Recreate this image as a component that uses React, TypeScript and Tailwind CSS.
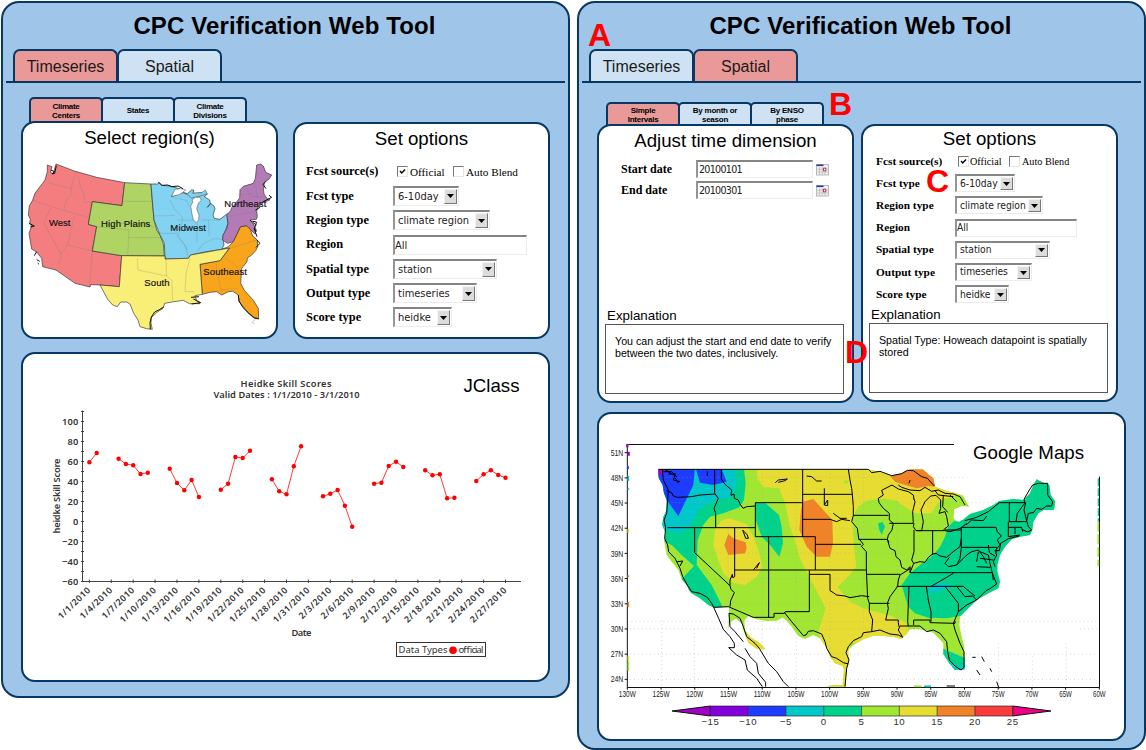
import React from "react";

const SANS = "font-['Liberation_Sans',Arial,sans-serif]";
const SERIF = "font-['Liberation_Serif','Times_New_Roman',serif]";
const UI = "font-['DejaVu_Sans_Condensed','DejaVu_Sans',sans-serif]";

function Tab({ label, active, first }: { label: string; active?: boolean; first?: boolean }) {
  return (
    <div
      className={`flex h-8 w-[105px] items-center justify-center rounded-t-[7px] border-2 border-b-0 border-[#073763] pt-[2px] text-[16px] leading-none text-[#1a1a1a] ${
        active ? "bg-[#ea9999]" : "bg-[#cfe2f3]"
      } ${first ? "" : "-ml-px"}`}
    >
      {label}
    </div>
  );
}

function SubTab({ lines, active, first }: { lines: string[]; active?: boolean; first?: boolean }) {
  return (
    <div
      className={`flex h-full w-[74px] flex-col items-center justify-center rounded-t-[5px] border-2 border-b-0 border-[#073763] text-[8px] leading-[9px] font-bold tracking-[-0.25px] ${
        active ? "bg-[#ea9999]" : "bg-[#cfe2f3]"
      } ${first ? "" : "-ml-[2px]"}`}
    >
      {lines.map((l) => (
        <div key={l}>{l}</div>
      ))}
    </div>
  );
}

function Arrow() {
  return (
    <div className="flex h-full w-[13px] shrink-0 items-center justify-center border border-t-[#f4f4f4] border-l-[#f4f4f4] border-r-[#777] border-b-[#777] bg-[#dcdcdc]">
      <svg width="7" height="4" viewBox="0 0 7 4">
        <path d="M0 0H7L3.5 4Z" fill="#000" />
      </svg>
    </div>
  );
}

const SUNKEN = "border-t-2 border-l-2 border-r border-b border-t-[#858585] border-l-[#959595] border-r-[#ececec] border-b-[#ececec] bg-white text-[#222]";

function Select({ text, width, small }: { text: string; width: string; small?: boolean }) {
  return (
    <div className={`flex items-center justify-between p-px pl-[3px] ${SUNKEN} ${width} ${small ? "h-[18px]" : "h-[20px]"}`}>
      <span className="whitespace-nowrap">{text}</span>
      <Arrow />
    </div>
  );
}

function Check({ checked }: { checked?: boolean }) {
  return (
    <span className="flex h-[11px] w-[11px] shrink-0 items-center justify-center border-t-[1.5px] border-r border-b border-l-[1.5px] border-t-[#777] border-r-[#e6e6e6] border-b-[#e6e6e6] border-l-[#777] bg-white">
      {checked && (
        <svg width="7" height="7" viewBox="0 0 7 7">
          <path d="M1 3L2.7 5L6 1.5" fill="none" stroke="#000" strokeWidth="1.4" />
        </svg>
      )}
    </span>
  );
}

const options = [
  { label: "Fcst type", value: "6-10day", big: "w-[66px]", small: "w-[60px]" },
  { label: "Region type", value: "climate region", big: "w-[97px]", small: "w-[88px]" },
  { label: "Region", value: "All", big: "w-[134px]", small: "w-[122px]", input: true },
  { label: "Spatial type", value: "station", big: "w-[104px]", small: "w-[95px]" },
  { label: "Output type", value: "timeseries", big: "w-[84px]", small: "w-[77px]" },
  { label: "Score type", value: "heidke", big: "w-[59px]", small: "w-[54px]" },
];

function OptionsForm({ small }: { small?: boolean }) {
  const row = small ? "h-[22.2px] grid-cols-[79px_1fr]" : "h-[24.3px] grid-cols-[87px_1fr]";
  const label = small ? "text-[11.35px]" : "text-[12.4px]";
  return (
    <div className={small ? "pl-[13px] text-[10.2px]" : "pl-[11px] text-[11px]"}>
      <div className={`grid items-center ${row}`}>
        <span className={`${SERIF} font-bold ${label}`}>Fcst source(s)</span>
        <span className={`flex items-center ${SERIF} ${small ? "pl-[3px] text-[10.2px]" : "pl-[4px] text-[11.2px]"}`}>
          <Check checked />
          <span className={`pt-[2px] whitespace-nowrap ${small ? "w-[40px] pl-[1px]" : "w-[45px] pl-[2px]"}`}>Official</span>
          <Check />
          <span className="pt-[2px] pl-[2px] whitespace-nowrap">Auto Blend</span>
        </span>
      </div>
      {options.map((o) => (
        <div key={o.label} className={`grid items-center ${row}`}>
          <span className={`${SERIF} font-bold ${label}`}>{o.label}</span>
          <span className={`${UI} leading-none`}>
            {o.input ? (
              <span className={`flex items-center ${SUNKEN} ${small ? "h-[18px]" : "h-[20px]"} ${small ? o.small : o.big}`}>{o.value}</span>
            ) : (
              <Select text={o.value} width={small ? o.small : o.big} small={small} />
            )}
          </span>
        </div>
      ))}
    </div>
  );
}

function CalendarIcon() {
  return (
    <svg width="13" height="12" viewBox="0 0 13 12" className="mt-[3px]">
      <rect x="0.5" y="0.5" width="12" height="10.5" fill="#f2f2f2" stroke="#aaa" strokeWidth="0.8" />
      <rect x="0.5" y="0.5" width="7" height="1.6" fill="#2a35a0" />
      <path d="M1 5.3H12M1 8H12M3.5 3V11M6.2 3V11M9 3V11" stroke="#b4b4b4" strokeWidth="0.7" />
      <rect x="7.4" y="4.2" width="2.4" height="2.6" fill="#fff" stroke="#b03040" strokeWidth="0.9" />
    </svg>
  );
}

function DateRow({ label, value }: { label: string; value: string }) {
  return (
    <div className="flex h-[21px] items-center">
      <span className={`w-[75px] text-[12px] font-bold ${SERIF}`}>{label}</span>
      <span className={`mr-[3px] flex h-[18px] w-[117px] items-center pl-px text-[10.6px] leading-none tracking-[-0.7px] ${UI} ${SUNKEN}`}>{value}</span>
      <CalendarIcon />
    </div>
  );
}

function Explanation({ children }: { children: React.ReactNode }) {
  return (
    <div className="mr-[8px] mb-[7px] ml-[6px] mt-auto">
      <div className="pl-[2px] text-[13.33px] leading-[17px]">Explanation</div>
      <div className="h-[70px] border border-[#555] pt-[10px] pl-[9px] text-[10.67px] leading-[12px] whitespace-nowrap">{children}</div>
    </div>
  );
}

function RegionMap() {
  const regions = [
    ["#f47d80", "M82 135L96 140L91 157L100 161L108 132L160 152L230 172L314 188L306 257L217 245L205 313L230 320L217 393L305 407L298 500L240 495L212 494L210 501L165 490L108 450L75 442L68 440L65 415L50 396L35 387L27 340L35 318L29 310L31 298L25 285L28 258L38 240L45 220L60 200L75 180L82 155Z"],
    ["#b0d464", "M314 188L393 192L397 245L402 300L410 330L420 345L430 372L433 408L305 407L217 393L230 320L205 313L217 245L306 257Z"],
    ["#82d2f2", "M393 192L414 192L416 186L425 196L450 198L480 207L462 220L455 229L490 218L503 221L515 210L522 211L518 220L545 218L562 222L553 230L569 240L571 252L562 262L572 250L582 258L585 266L579 285L583 295L600 298L622 281L624 310L617 330L608 352L612 375L605 388L560 395L512 405L505 415L435 417L433 370L420 345L402 300Z"],
    ["#b37ab6", "M710 135L722 132L730 138L737 157L755 165L747 178L734 185L730 205L732 222L742 237L750 236L748 241L731 246L714 262L710 273L712 290L709 298L690 300L700 312L709 330L705 342L680 318L662 320L650 345L640 365L622 370L608 360L609 345L620 326L624 310L620 285L632 272L635 263L641 257L659 234L660 209L670 199L700 190L706 176Z"],
    ["#f9a51b", "M605 388L625 380L640 365L650 345L662 320L680 318L691 328L698 348L712 360L713 380L707 392L695 405L682 414L681 425L665 445L662 490L673 511L700 541L715 565L716 597L703 595L685 580L670 560L657 545L655 525L638 514L625 515L605 525L590 515L570 517L547 523L540 433L600 422L628 385Z"],
    ["#f9ee76", "M305 407L435 408L435 417L505 415L512 405L628 384L600 422L540 433L547 523L525 527L529 540L540 551L508 551L490 541L456 546L434 550L429 565L411 577L394 593L393 610L397 628L380 626L360 620L354 600L341 580L330 552L320 546L302 546L292 560L278 555L263 538L240 495L298 500Z"],
  ];
  return (
    <svg width="249" height="175" viewBox="12 120 747 525" className="block">
      {regions.map(([fill, d]) => (
        <path key={fill} d={d} fill={fill} stroke="#333" strokeWidth="2" strokeLinejoin="round" />
      ))}
      <path d="M490 218L503 221L515 210L522 211L518 220L545 218L556 210L562 222L540 228L515 234L505 226Z" fill="#82d2f2" stroke="#444" strokeWidth="1.5" />
      <path d="M455 229L465 208L482 206L497 210L478 224Z" fill="#fff" stroke="#444" strokeWidth="1.5" />
      <path d="M516 240L526 232L540 232L544 241L535 249L530 266L537 286L536 299L529 308L520 300L516 282L512 258L519 246Z" fill="#fff" stroke="#444" strokeWidth="1.5" />
      <path
        d="M85 188L155 206M168 158L152 208L157 222L137 245L132 270M38 240L110 265L207 293M175 170L182 203L190 218L194 246L216 247M92 262L72 311L122 401L124 416L113 434M162 290L143 375L122 401M143 375L217 393L208 500M309 244H397M303 310L380 312L402 322M230 320L327 330L323 406M327 353L423 353M404 288L465 286M412 340L470 340L490 370L503 390M449 239L465 270L488 293L482 325L472 350L495 375L505 415M459 232L500 242L508 260M472 300L524 301M531 308V368M565 300L568 350M531 395L548 372L582 356L605 358M352 415L354 450L440 468L456 482L458 545M438 417L440 468M510 415L498 460L495 515H523M587 424L600 500L605 512M614 412L645 435L665 455M628 385L711 360M624 290L698 275L713 285M545 300H602M600 510L652 505M680 200L690 228L735 232M705 192L713 232M663 225L700 220"
        fill="none"
        stroke="#777"
        strokeOpacity="0.38"
        strokeWidth="2"
      />
      <path d="M93 150L103 155L96 162L104 160L109 137M27 310L43 318L31 321M50 395L43 407M50 419L59 424M53 429L57 433M391 628L390 608L394 591L404 576L418 569L431 561M655 525L657 543L669 563L686 579L703 593L716 596M513 532L537 530M520 537L542 548L515 552M690 300L707 314L703 326L709 334M728 246L755 232L747 226M710 360L720 370L708 382M738 184L729 193L738 206M706 271L720 262M702 325L711 350M698 304L709 306L707 318M416 187L426 196L443 195L455 200L474 198L489 206" fill="none" stroke="#111" strokeWidth="3" />
      <path d="M705 598L696 608L703 611" fill="none" stroke="#aaa" strokeWidth="2" />
      <g fontFamily="Liberation Sans, Arial, sans-serif" fontSize="28.5" fill="#111" stroke="#111" strokeWidth="0.5">
        <text x="87" y="317">West</text>
        <text x="243" y="320" textLength="148">High Plains</text>
        <text x="451" y="334" textLength="107">Midwest</text>
        <text x="373" y="497" textLength="76">South</text>
        <text x="613" y="260" textLength="126">Northeast</text>
        <text x="550" y="465" textLength="131">Southeast</text>
      </g>
    </svg>
  );
}

const series: [number, number][][] = [
  [[0, 58.7], [1, 68]],
  [[4, 62.3], [5, 57], [6, 55.7], [7, 47], [8, 48.3]],
  [[11, 52.3], [12, 38], [13, 30.7], [14, 41], [15, 24]],
  [[18, 31.3], [19, 37.3], [20, 64], [21, 63], [22, 70.3]],
  [[25, 41.7], [26, 29.7], [27, 26.7], [28, 54.7], [29, 74.7]],
  [[32, 24.7], [33, 27.3], [34, 31], [35, 15.3], [36, -5.7]],
  [[39, 37.3], [40, 38.3], [41, 55], [42, 59.3], [43, 54]],
  [[46, 50.7], [47, 45.7], [48, 46.7], [49, 22.7], [50, 23.3]],
  [[53, 40], [54, 46.7], [55, 50.7], [56, 46], [57, 43.3]],
];
const dates = ["1/1", "1/4", "1/7", "1/10", "1/13", "1/16", "1/19", "1/22", "1/25", "1/28", "1/31", "2/3", "2/6", "2/9", "2/12", "2/15", "2/18", "2/21", "2/24", "2/27"];
const dayX = (d: number) => 89.4 + d * 7.3;
const scoreY = (v: number) => 521 - v;

function Chart() {
  const ticks = Array.from({ length: 18 }, (_, i) => -60 + i * 10);
  return (
    <svg width="525" height="326" viewBox="23 354 525 326" className="block" fontFamily="Noto Sans, DejaVu Sans, sans-serif" fill="#333">
      <g fontSize="9.3" fontWeight="600">
        <text x="240.5" y="387" textLength="91">Heidke Skill Scores</text>
        <text x="213.5" y="397.5" textLength="146">Valid Dates : 1/1/2010 - 3/1/2010</text>
        <text x="291.5" y="636" textLength="20">Date</text>
        <text transform="translate(59.5 533.5) rotate(-90)" textLength="75">heidke Skill Score</text>
      </g>
      <path d="M82.5 410.5V581.5H521" fill="none" stroke="#444" />
      {ticks.map((t) => (
        <g key={t}>
          <path d={`M81 ${scoreY(t) + 0.5}h3`} stroke="#444" />
          {t % 20 === 0 && (
            <text x="78.5" y={scoreY(t) + 4.3} textAnchor="end" fontSize="9.3" fontWeight="600" letterSpacing="0.2">
              {t < 0 ? `−${-t}` : t}
            </text>
          )}
        </g>
      ))}
      {dates.map((d, i) => (
        <g key={d}>
          <path d={`M${dayX(i * 3)} 579.5v3.5`} stroke="#444" />
          <text transform={`translate(${dayX(i * 3) + 2} 590.5) rotate(-44)`} textAnchor="end" fontSize="8.8" fontWeight="600" letterSpacing="0.55">
            {`${d}/2010`}
          </text>
        </g>
      ))}
      {series.map((s, i) => (
        <g key={i}>
          <polyline points={s.map(([d, v]) => `${dayX(d)},${scoreY(v)}`).join(" ")} fill="none" stroke="#ff3a3a" />
          {s.map(([d, v]) => (
            <circle key={d} cx={dayX(d)} cy={scoreY(v)} r="2.2" fill="#ff0000" />
          ))}
        </g>
      ))}
      <rect x="396.5" y="642.5" width="89" height="14" fill="#fff" stroke="#333" />
      <text x="398.5" y="652.5" fontSize="9.5" textLength="49">Data Types</text>
      <circle cx="453" cy="650.3" r="3.8" fill="#ff0000" />
      <text x="458.5" y="652.5" fontSize="9.5" textLength="25">official</text>
      <text x="463.5" y="392" fontSize="18.67" fill="#000" fontFamily="Liberation Sans, Arial, sans-serif">
        JClass
      </text>
    </svg>
  );
}

const LAND =
  "M175 118H805L835 125L875 137L905 130L930 118H968L985 133L1000 145L1005 170L1040 183L1065 188L1090 197L1100 218L1108 230L1085 228L1065 240L1060 262L1070 275L1088 270L1110 252L1150 240L1180 225L1198 213L1240 207L1270 210L1290 190L1300 165L1310 148L1330 158L1348 165L1352 195L1366 215L1362 240L1330 240L1315 250L1300 275L1297 300L1290 315L1260 320L1235 328L1215 350L1200 375L1192 405L1192 425L1200 455L1195 475L1165 490L1130 510L1100 540L1080 560L1078 585L1085 620L1093 650L1094 718L1065 720L1048 700L1030 672L1030 640L1012 620L1000 608L960 598L930 598L920 612L902 627L880 620L840 617L820 617L790 628L760 645L745 660L745 690L740 720L736 770H680L700 765L728 766L732 720L728 708L705 700L690 680L680 655L660 625L640 615L615 627L595 618L575 590L560 572L548 563L530 572L500 573L470 568L445 558L433 572L435 600L450 620L480 640L497 658L470 656L445 638L430 600L425 580L408 566L392 575L385 598L387 532H341L325 525L300 505L270 487L260 465L245 448L235 420L215 395L200 375L193 335L197 310L187 285L190 262L200 240L200 210L192 190L188 165L175 142Z";

const bands: [string, string][] = [
  ["#00d28c", "M160 100H430L437 160L432 210L418 232L370 250L330 260L310 285L293 330L290 405L305 425L335 465L365 525L367 540H320L240 452L282 408L245 375L215 345L180 330Z"],
  ["#00c8c8", "M160 100H400L412 155L395 200L345 213L300 235L270 290L235 312L200 300L180 290Z"],
  ["#1e3cff", "M170 110H285L280 165L235 258L200 210L180 160Z"],
  ["#1e3cff", "M288 118H365L380 155L340 165L300 158Z"],
  ["#a000c8", "M170 110H197L198 122L180 137H170Z"],
  ["#e6dc32", "M385 264L440 282L460 320L475 360L488 410L470 440L435 465L400 458L370 430L355 390L340 345L345 300L360 275Z"],
  ["#f08228", "M385 312L400 325L437 337L440 355L435 370L385 375L373 345Z"],
  ["#00d28c", "M467 218H495L537 255L545 290L549 340L538 380L510 345L485 320L467 270Z"],
  ["#e6dc32", "M470 110L472 145L490 172L537 175L555 218L570 290L590 350L600 385L625 435L677 535L655 605L670 650L680 780H750L750 640L925 625L925 598L915 575L880 560L830 545L790 535L750 515L712 470L735 450L769 410L762 350L757 265L775 230L800 212L850 205L890 212L920 235L945 250H995L1010 222L1030 208L1060 200L1078 195L1060 180L1010 170L1000 110Z"],
  ["#a0e632", "M730 156L738 151L746 156L738 162Z"],
  ["#f08228", "M870 137L900 130L930 115H968L990 130L1005 150L1007 170L985 168L950 175L915 165L885 155Z"],
  ["#f08228", "M608 215L640 207L665 235L697 270L699 340L690 380H650L620 350L598 300L603 240Z"],
  ["#00d28c", "M834 280L848 276L855 290L845 314L838 300Z"],
  ["#00d28c", "M1120 240L1060 275L1045 290L1035 320L1020 350L1000 375L960 405L930 430L905 465L915 500L925 530L945 550L985 563L1040 565L1078 558L1400 560V120H1240Z"],
  ["#00c8c8", "M980 472L1010 458L1050 463L1045 475L1025 480L1000 490L985 485Z"],
  ["#00d28c", "M1020 652L1096 685V725H1020Z"],
  ["#00c8c8", "M1035 690L1075 712L1096 700V725H1045Z"],
  ["#e6dc32", "M435 610L460 628L480 640L500 660H450Z"],
];

const BORDERS =
  "M175 118H805L815 128L840 124L875 137L905 131L922 121L940 122L965 140L982 145L1003 168M187 118L190 150L205 180L203 210L200 250L192 270L197 293L194 325L203 345L206 365L225 385L240 415L248 440L262 465L275 485L300 490L322 502L335 520L341 532L356 565L370 598L390 620L403 640V653H386L410 675L435 690L442 720L470 745L487 770M200 182L215 188L220 198L232 202L275 200L300 195L345 192M344 118V190L355 205L342 235L347 250V293M202 293H466M284 293V368L390 467L393 478L403 488L392 512L390 530M341 532L385 530L460 562H522V550H553L556 545H628V420M553 547L575 575L600 605L610 617L618 615L625 604L640 602L665 612L675 635L680 655L695 680L710 685L730 698L745 702M404 293V440L398 443L397 433L390 450V467M404 420H799M466 320V218H608M466 320H646V420M506 320V562M364 118V147L375 163L395 180L393 196L402 192L403 205L415 210L420 222L429 235L440 230L466 228M608 118V320M608 193H757M608 268H690L710 275L725 268L750 272M646 343H783M745 118L750 150L755 175L757 193L760 230V256L755 275L772 295L776 325L790 343L784 349L799 365V420L803 505L808 520V545L818 570L815 605M760 256H865M775 328H862L867 337M628 433H690V482L700 488L710 495L735 498L750 503L785 497L808 500M799 433H900M808 520H868M932 415L900 435L895 450L893 469L870 500L862 520L865 535L857 570H895V578L897 590M876 165L845 181L850 195L835 205L837 218L850 235L868 250V270L880 280L876 300L865 315L862 328L870 355L885 362L888 380L900 390L905 412L920 420L930 410V428L941 400M868 280H940M876 165L895 177L925 185L940 195L942 208M940 280L938 245L945 215L941 205M942 280L940 290L948 302H965L970 275L963 240L975 215L992 198L1008 196L1022 210L1022 235L1017 250L1035 245L1040 260L1045 288L1030 300M942 300V365L935 390L941 400L960 395L975 397L985 382L998 372L1008 370L1020 378L1040 382L1060 365L1080 350L1084 325M998 300V375M950 302H1035L1050 305L1083 294L1100 280M895 165L905 172L930 180L960 182L975 172L995 184L1015 180M930 150L927 160M930 428H1177L1180 450M890 469H1070L1095 500L1118 498L1130 510M927 469L923 575L925 588M979 469L985 510L993 545L993 575M941 585V570H990V578L1065 580V573M1035 469L1075 520V545M1060 430L1030 448L1000 465M993 469L1000 465M1070 469H1090L1100 478L1125 498M1084 292V352M1084 352H1190L1188 370M1084 292H1188L1192 305L1204 318L1192 330L1200 345L1185 362M1084 300L1035 300M1098 285L1115 270L1150 272L1160 258M1094 272L1130 262L1165 245L1198 218H1275L1272 208L1288 180L1298 165L1315 160H1343V195L1358 215L1355 228L1340 228L1325 238L1310 235L1300 248L1285 250L1280 272M1228 218V275M1248 275L1252 250L1270 225L1277 218L1272 240L1280 272M1228 275H1280M1225 292H1265L1268 305M1225 275V320L1260 315M1245 292V312M1280 272L1285 290L1295 300L1283 306L1265 298M1258 318L1225 326L1202 340L1198 362L1185 362L1190 375L1180 395L1185 410M1084 352L1080 385L1070 405L1045 410L1035 400L1048 382M1070 405L1100 375L1115 365L1135 360L1150 380L1160 400M1140 365L1165 375L1170 400L1177 430L1185 450L1190 462L1170 476L1158 482L1130 510L1100 525L1075 545L1060 580L1065 600L1080 640L1092 665V712L1083 720L1065 708L1048 690L1043 665L1040 635L1020 610L1000 600L980 605L960 588H900L895 600L908 622L895 615L870 612L840 600L815 605L790 608L785 620L760 632L745 650L738 668L747 690L740 715L735 770M387 550L400 552L420 565L430 590L440 620L465 640L478 655L490 675L505 700L530 725L550 755L565 770M387 550L390 590L405 605L430 635M435 655L450 680L470 700L475 730L497 757V770M186 125L215 125L225 135L220 150L240 155M197 120L230 140M205 132L228 132M225 143L235 160M322 124V138M526 158L535 150L562 147L555 152L535 157M428 300L442 315L445 325L437 325ZM460 420L478 398L470 415M232 395L248 393L240 408M620 138L635 140L650 153H665M673 175V225L683 210V227L673 225M700 250L720 265H740M1015 180L1035 190L1060 192L1080 200L1095 225M1005 182L1015 195L1060 200M1030 195L1028 230L1043 247M1050 195L1070 215M1135 365L1130 395M1165 345L1168 368L1185 378M1140 385L1180 390M1130 410L1170 412M1117 682H1127M1145 680L1153 695M1130 720L1140 735M1170 715L1175 725M1190 755L1197 775M1040 768H1065";

function ForecastMap() {
  const scale = ["#8200dc", "#1e3cff", "#00c8c8", "#00d28c", "#a0e632", "#e6dc32", "#f08228", "#fa3c3c"];
  const marks = ["−15", "−10", "−5", "0", "5", "10", "15", "20", "25"];
  const lats = [51, 48, 45, 42, 39, 36, 33, 30, 27, 24];
  const lons = [130, 125, 120, 115, 110, 105, 100, 95, 90, 85, 80, 75, 70, 65, 60];
  const lonX = (i: number) => 82 + i * 101.14;
  const latY = (i: number) => 68 + i * 75.55;
  return (
    <svg width="523" height="324" viewBox="0 -48 1569 972" className="block" fontFamily="Liberation Sans, Arial, sans-serif">
      <defs>
        <clipPath id="land">
          <path d={LAND} />
        </clipPath>
      </defs>
      <path d={LAND} fill="#a0e632" />
      <g clipPath="url(#land)">
        {bands.map(([fill, d], i) => (
          <path key={i} d={d} fill={fill} />
        ))}
      </g>
      <path d="M1062 238L1088 228L1110 240L1106 252L1092 262L1078 275L1064 270Z" fill="#fff" />
      <path d="M82 575H1500M185 570V770M283 597V770M385 118V532M487 118V770M589 118V770M690 118V770M791 118V590M892 130V600M993 180V600M1094 290V640M1196 230V460M1196 640V770M1297 160V270M1297 680V770M1399 640V770M175 142H1100M190 218H1370M190 294H1290M205 370H1200M250 446H1200M340 521H1120M90 597H1000M90 672H1490M90 748H1490M1440 597H1490" fill="none" stroke="#a8a8a8" strokeOpacity="0.55" strokeWidth="2.5" strokeDasharray="3 9" />
      <path d={BORDERS} fill="none" stroke="#000" strokeWidth="3" strokeLinejoin="round" />
      <path d="M82 43.5H1062M82 43.5V772.5H1498.5V140" fill="none" stroke="#111" strokeWidth="3" />
      <path d="M82 42V52M86 65V77" stroke="#a000c8" strokeWidth="7" />
      <path d="M84 108V118" stroke="#1e3cff" strokeWidth="5" />
      <path d="M85 138V153M85 175V180" stroke="#00c8c8" strokeWidth="5" />
      <path d="M85 297V309M85 677V693" stroke="#e6dc32" strokeWidth="5" />
      <path d="M85 695V722" stroke="#a0e632" strokeWidth="5" />
      <path d="M85 516V532M85 436V442" stroke="#f08228" strokeWidth="5" />
      <path d="M1495 145V275" stroke="#00d28c" strokeWidth="4" strokeDasharray="24 6" />
      <path d="M1495 275V408" stroke="#a0e632" strokeWidth="5" strokeDasharray="30 8" />
      <path d="M942 769H965" stroke="#a0e632" strokeWidth="5" />
      <path d="M972 769H993" stroke="#00c8c8" strokeWidth="5" />
      {lats.map((l, i) => (
        <g key={l}>
          <path d={`M74 ${latY(i)}H82`} stroke="#111" strokeWidth="3" />
          <text x="70" y={latY(i) + 9.5} textAnchor="end" fontSize="26" textLength="38" lengthAdjust="spacingAndGlyphs" fill="#222">
            {`${l}N`}
          </text>
        </g>
      ))}
      {lons.map((l, i) => (
        <g key={l}>
          <path d={`M${lonX(i)} 772v7`} stroke="#111" strokeWidth="3" />
          <text x={lonX(i)} y="801" textAnchor="middle" fontSize="26" textLength={l > 99 ? 51 : 38} lengthAdjust="spacingAndGlyphs" fill="#222">
            {`${l}W`}
          </text>
        </g>
      ))}
      <path d="M331 828L216 843L331 858Z" fill="#a000c8" stroke="#111" strokeWidth="3" />
      <path d="M1238 828L1353 843L1238 858Z" fill="#f00082" stroke="#111" strokeWidth="3" />
      {scale.map((c, i) => (
        <rect key={c} x={331 + i * 113.4} y="828" width="113.4" height="30" fill={c} />
      ))}
      <path d="M331 828H1238M331 858H1238M331 828V858M444.4 828V858M557.8 828V858M671.2 828V858M784.6 828V858M898 828V858M1011.4 828V858M1124.8 828V858M1238 828V858" stroke="#222" strokeOpacity="0.8" strokeWidth="2.5" />
      {marks.map((m, i) => (
        <text key={m} x={331 + i * 113.4} y="886" textAnchor="middle" fontSize="29" letterSpacing="1.5" fill="#333">
          {m}
        </text>
      ))}
      <text x="1119" y="87" fontSize="56" fill="#000">
        Google Maps
      </text>
    </svg>
  );
}

const CARD = "flex flex-col rounded-[14px] border-2 border-[#073763] bg-white";
const HEADING = "text-center text-[18.67px] leading-[22px]";
const LETTER = "absolute text-[32px] leading-[36px] font-bold text-[#ff0000]";

function Window({ active, height, children }: { active: number; height: string; children: React.ReactNode }) {
  return (
    <section className={`flex w-[569px] shrink-0 flex-col rounded-[18px] border-2 border-[#073763] bg-[#9fc5e8] ${height}`}>
      <h1 className="flex h-[46px] items-center justify-center pr-[2px] text-[24px] leading-none font-bold tracking-[0.12px]">CPC Verification Web Tool</h1>
      <div className="flex h-8 pl-[10px]">
        <Tab label="Timeseries" active={active === 0} first />
        <Tab label="Spatial" active={active === 1} />
      </div>
      <div className="mx-[3px] h-[2px] shrink-0 bg-[#073763]" />
      {children}
    </section>
  );
}

export default function App() {
  return (
    <main className={`relative flex h-[750px] w-[1146px] items-start gap-[7px] overflow-hidden bg-white pt-px pl-px text-black ${SANS}`}>
      <Window active={0} height="h-[697px]">
        <div className="mt-[14px] flex h-[25px] pl-[26px]">
          <SubTab lines={["Climate", "Centers"]} active first />
          <SubTab lines={["States"]} />
          <SubTab lines={["Climate", "Divisions"]} />
        </div>
        <div className="-mt-px flex gap-[15px] pl-[18px]">
          <div className={`${CARD} h-[218px] w-[257px]`}>
            <h2 className={`${HEADING} pt-[4px]`}>Select region(s)</h2>
            <div className="pt-[11px] pl-px">
              <RegionMap />
            </div>
          </div>
          <div className={`${CARD} mt-px h-[217px] w-[257px]`}>
            <h2 className={`${HEADING} pt-[4px] pb-[9.5px]`}>Set options</h2>
            <OptionsForm />
          </div>
        </div>
        <div className={`${CARD} mt-[13px] ml-[18px] h-[330px] w-[529px]`}>
          <Chart />
        </div>
      </Window>

      <Window active={1} height="h-[749px]">
        <div className="mt-[19px] flex h-[24px] pl-[27px]">
          <SubTab lines={["Simple", "Intervals"]} active first />
          <SubTab lines={["By month or", "season"]} />
          <SubTab lines={["By ENSO", "phase"]} />
        </div>
        <div className="-mt-[2px] flex gap-[7px] pl-[18px]">
          <div className={`${CARD} h-[279px] w-[257px]`}>
            <h2 className={`${HEADING} pt-[4px]`}>Adjust time dimension</h2>
            <div className="pt-[6px] pl-[22px]">
              <DateRow label="Start date" value="20100101" />
              <DateRow label="End date" value="20100301" />
            </div>
            <Explanation>
              You can adjust the start and end date to verify
              <br />
              between the two dates, inclusively.
            </Explanation>
          </div>
          <div className={`${CARD} h-[278px] w-[257px]`}>
            <h2 className={`${HEADING} pt-[2px]`}>Set options</h2>
            <OptionsForm small />
            <Explanation>
              Spatial Type: Howeach datapoint is spatially
              <br />
              stored
            </Explanation>
          </div>
        </div>
        <div className={`${CARD} mt-[9px] ml-[18px] h-[329px] w-[529px] pl-px`}>
          <ForecastMap />
        </div>
      </Window>

      <span className={`${LETTER} top-[17px] left-[588px]`}>A</span>
      <span className={`${LETTER} top-[86px] left-[829px]`}>B</span>
      <span className={`${LETTER} top-[163px] left-[926px]`}>C</span>
      <span className={`${LETTER} top-[334px] left-[845px]`}>D</span>
    </main>
  );
}
